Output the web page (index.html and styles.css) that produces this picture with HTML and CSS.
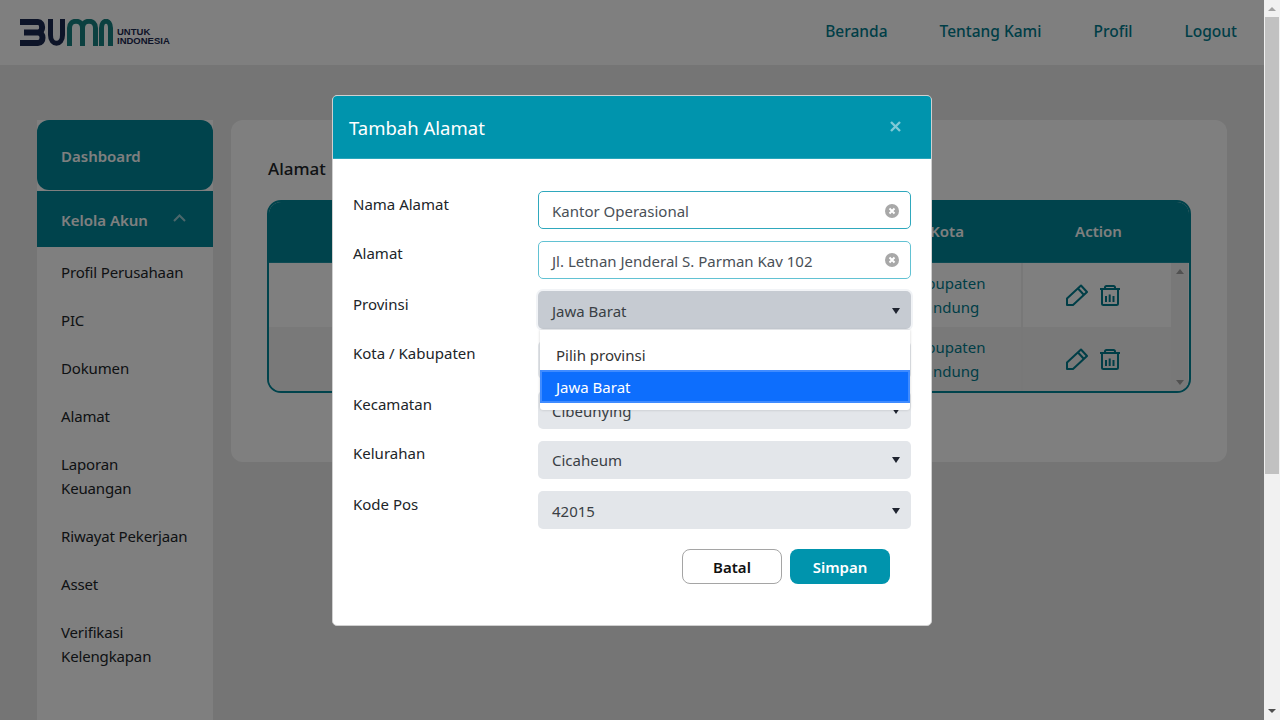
FILE: index.html
```html
<!DOCTYPE html>
<html lang="id">
<head>
<meta charset="utf-8">
<title>Tambah Alamat</title>
<link rel="stylesheet" href="styles.css">
</head>
<body>
<div class="page">
  <header class="topbar">
    <div class="logo">
      <svg class="logo-mark" width="93" height="27" viewBox="0 0 93 27" fill="none">
        <path d="M0 3H18C23.500 3 23.500 13.500 18 13.500H4M18 13.500C24 13.500 24 24 18 24H0" stroke="#1a2850" stroke-width="6" stroke-linejoin="round"/>
        <path d="M30.500 0V16C30.500 27 42.500 27 42.500 16V0" stroke="#1a2850" stroke-width="5"/>
        <path d="M49.500 27V9C49.500 0 62.500 0 62.500 9V27M62.500 9C62.500 0 75.500 0 75.500 9V27" stroke="#168080" stroke-width="5"/>
        <path d="M81.500 27V9C81.500 0 90.500 0 90.500 9V27" stroke="#168080" stroke-width="5"/>
      </svg>
      <div class="logo-text"><span>UNTUK</span><span>INDONESIA</span></div>
    </div>
    <nav class="topnav">
      <a>Beranda</a><a>Tentang Kami</a><a>Profil</a><a>Logout</a>
    </nav>
  </header>
  <main class="content">
    <aside class="sidebar">
      <div class="side-dash">Dashboard</div>
      <div class="side-group">
        <span>Kelola Akun</span>
        <svg class="chev" width="13" height="8" viewBox="0 0 13 8" fill="none"><path d="M1 7L6.500 1.500L12 7" stroke="#fff" stroke-width="2"/></svg>
      </div>
      <ul class="side-list">
        <li>Profil Perusahaan</li>
        <li>PIC</li>
        <li>Dokumen</li>
        <li>Alamat</li>
        <li>Laporan Keuangan</li>
        <li>Riwayat Pekerjaan</li>
        <li>Asset</li>
        <li>Verifikasi Kelengkapan</li>
      </ul>
    </aside>
    <section class="card">
      <h2 class="card-title">Alamat</h2>
      <div class="table">
        <div class="thead">
          <div class="th th-main"></div>
          <div class="th th-kota">Kota</div>
          <div class="th th-action">Action</div>
        </div>
        <div class="tbody">
          <div class="rows">
            <div class="row">
              <div class="td td-main"></div>
              <div class="td td-kota">Kabupaten<br>Bandung</div>
              <div class="td td-action">
                <svg width="23" height="22" viewBox="0 0 23 22" fill="none" stroke="#007c8e" stroke-width="2" stroke-linejoin="round"><path d="M2 21V14.500L16 1.500L22 8L8 21Z"/><path d="M13 4.500L19 11"/></svg>
                <svg width="22" height="22" viewBox="0 0 22 22" fill="none" stroke="#007c8e" stroke-width="2" stroke-linejoin="round"><path d="M1 5H21M6 5V3.500Q6 2 7.500 2H14.500Q16 2 16 3.500V5M3 5V19.500Q3 21 4.500 21H17.500Q19 21 19 19.500V5"/><path d="M7 12V18M10.700 10.500V18M14.500 12V18"/></svg>
              </div>
            </div>
            <div class="row">
              <div class="td td-main"></div>
              <div class="td td-kota">Kabupaten<br>Bandung</div>
              <div class="td td-action">
                <svg width="23" height="22" viewBox="0 0 23 22" fill="none" stroke="#007c8e" stroke-width="2" stroke-linejoin="round"><path d="M2 21V14.500L16 1.500L22 8L8 21Z"/><path d="M13 4.500L19 11"/></svg>
                <svg width="22" height="22" viewBox="0 0 22 22" fill="none" stroke="#007c8e" stroke-width="2" stroke-linejoin="round"><path d="M1 5H21M6 5V3.500Q6 2 7.500 2H14.500Q16 2 16 3.500V5M3 5V19.500Q3 21 4.500 21H17.500Q19 21 19 19.500V5"/><path d="M7 12V18M10.700 10.500V18M14.500 12V18"/></svg>
              </div>
            </div>
          </div>
          <div class="mini-scroll">
            <svg width="8" height="5" viewBox="0 0 8 5"><path d="M4 0L8 5H0Z" fill="#a3a3a3"/></svg>
            <svg width="8" height="5" viewBox="0 0 8 5"><path d="M0 0H8L4 5Z" fill="#a3a3a3"/></svg>
          </div>
        </div>
      </div>
    </section>
  </main>
</div>
<div class="backdrop"></div>
<div class="scrollbar">
  <svg width="8" height="4" viewBox="0 0 8 4"><path d="M4 0L8 4H0Z" fill="#a3a3a3"/></svg>
  <div class="thumb"></div>
  <svg class="arrow-down" width="8" height="4" viewBox="0 0 8 4"><path d="M0 0H8L4 4Z" fill="#505050"/></svg>
</div>
<div class="modal">
  <div class="modal-head">
    <h3>Tambah Alamat</h3>
    <svg class="modal-close" width="11" height="11" viewBox="0 0 11 11"><path d="M1 1L10 10M10 1L1 10" stroke="#7fcad6" stroke-width="2.400"/></svg>
  </div>
  <form class="modal-body">
    <div class="field"><label>Nama Alamat</label>
      <div class="input"><span>Kantor Operasional</span>
        <svg width="14" height="14" viewBox="0 0 14 14"><circle cx="7" cy="7" r="7" fill="#a8a8a8"/><path d="M4.500 4.500L9.500 9.500M9.500 4.500L4.500 9.500" stroke="#fff" stroke-width="2"/></svg>
      </div>
    </div>
    <div class="field"><label>Alamat</label>
      <div class="input input-soft"><span>Jl. Letnan Jenderal S. Parman Kav 102</span>
        <svg width="14" height="14" viewBox="0 0 14 14"><circle cx="7" cy="7" r="7" fill="#a8a8a8"/><path d="M4.500 4.500L9.500 9.500M9.500 4.500L4.500 9.500" stroke="#fff" stroke-width="2"/></svg>
      </div>
    </div>
    <div class="field"><label>Provinsi</label>
      <div class="select select-open"><span>Jawa Barat</span><i class="caret"></i>
        <div class="dropdown">
          <div class="option">Pilih provinsi</div>
          <div class="option option-active">Jawa Barat</div>
        </div>
      </div>
    </div>
    <div class="field"><label>Kota / Kabupaten</label><div class="select"></div></div>
    <div class="field"><label>Kecamatan</label><div class="select"><span>Cibeunying</span><i class="caret"></i></div></div>
    <div class="field"><label>Kelurahan</label><div class="select"><span>Cicaheum</span><i class="caret"></i></div></div>
    <div class="field"><label>Kode Pos</label><div class="select"><span>42015</span><i class="caret"></i></div></div>
    <div class="actions">
      <button type="button" class="btn btn-cancel">Batal</button>
      <button type="button" class="btn btn-save">Simpan</button>
    </div>
  </form>
</div>
</body>
</html>
```
FILE: styles.css
```css
* { box-sizing: border-box; }
html, body { margin: 0; height: 720px; overflow: hidden; }
body { font-family: "Noto Sans", "Open Sans", sans-serif; font-size: 15px; line-height: 24px; color: #212529; background: #ebebeb; }

.page { width: 1264px; height: 720px; overflow: hidden; }

.topbar { height: 65px; background: #fff; display: flex; align-items: center; justify-content: space-between; padding: 0 27px 3px 20px; }
.logo { display: flex; align-items: center; gap: 4px; padding-top: 3px; }
.logo-mark { display: block; }
.logo-text { display: flex; flex-direction: column; font-family: "Liberation Sans", sans-serif; font-weight: 700; color: #1a2850; font-size: 9.500px; line-height: 9px; padding-top: 6px; }
.topnav { display: flex; gap: 52px; }
.topnav a { color: #007c8e; font-weight: 500; font-size: 15.500px; }

.content { display: flex; gap: 18px; padding: 55px 37px 0; align-items: flex-start; }
.sidebar { width: 176px; background: #fff; height: 640px; flex: none; }
.side-dash { height: 70px; background: #008799; border-radius: 12px; color: #fff; font-weight: 600; padding: 24px; margin-bottom: 1px; }
.side-group { height: 56px; background: #008799; color: #fff; font-weight: 600; padding: 1px 27px 0 24px; display: flex; align-items: center; justify-content: space-between; }
.chev { margin-top: -3px; opacity: .6; }
.side-list { list-style: none; margin: 1px 0 0; padding: 0; letter-spacing: -0.15px; }
.side-list li { padding: 12px 24px; }

.card { width: 996px; height: 342px; background: #fff; border-radius: 12px; padding: 36px 36px 0 37px; }
.card-title { margin: 0 0 19px; font-size: 17px; line-height: 25px; font-weight: 500; }
.table { border-radius: 14px; overflow: hidden; width: 924px; height: 193px; border: 2px solid #008799; background: #fff; margin-left: -1px; }
.thead { height: 60px; background: #008799; display: flex; color: #fff; font-weight: 600; align-items: center; padding-bottom: 2px; }
.th-main { flex: 1; }
.th-kota { width: 148px; text-align: center; }
.th-action { width: 168px; text-align: center; padding-right: 13px; }
.tbody { display: flex; height: 129px; border-top: 1px solid #1a95a6; }
.rows { flex: 1; }
.row { height: 64px; display: flex; color: #007c8e; }
.row + .row { background: #f2f2f2; }
.td-main { flex: 1; }
.td-kota { width: 148px; padding: 8px 0; text-align: center; }
.td-action { width: 150px; border-left: 2px solid #f0f0f0; display: flex; align-items: center; justify-content: center; gap: 11px; padding-right: 8px; }
.mini-scroll { width: 17px; margin-right: 1px; background: #f1f1f1; display: flex; flex-direction: column; justify-content: space-between; align-items: center; padding: 6px 0; }

.scrollbar { position: fixed; top: 0; right: 0; width: 16px; height: 720px; background: #f1f1f1; padding: 7px 1px 7px; display: flex; flex-direction: column; align-items: center; }
.thumb { height: 457px; width: 100%; margin-top: 6px; background: #c1c1c1; }
.arrow-down { margin-top: auto; }

.backdrop { position: fixed; inset: 0; background: rgba(0, 0, 0, 0.5); }

.modal { position: fixed; left: 332px; top: 95px; width: 600px; height: 531px; background: #fff; border: 1px solid #d0d0d0; border-radius: 5px; }
.modal-head { height: 63px; background: #0094ad; display: flex; align-items: center; justify-content: space-between; padding: 0 30px 0 16px; border-radius: 4px 4px 0 0; border-bottom: 1px solid #2aa6bb; }
.modal-head h3 { margin: 2px 0 0; font-size: 18.500px; line-height: 28px; font-weight: 400; color: #fff; }
.modal-close { margin-bottom: 2px; }
.modal-body { padding: 32px 20px 0; display: flex; flex-direction: column; gap: 12px; }
.field { display: flex; height: 38px; }
.field label { width: 185px; flex: none; height: 26px; line-height: 26px; }
.field:nth-child(even) label { margin-top: -1px; }
.input, .select { width: 373px; height: 38px; border-radius: 5px; display: flex; align-items: center; justify-content: space-between; padding: 1px 11px 0 14px; color: #495057; position: relative; }
.input { border: 1px solid #2fa8bd; background: #fff; padding-left: 13px; }
.input-soft svg { margin-top: -1px; }
.input-soft { border-color: #62c2d3; }
.select { background: #e3e6ea; color: #3a3f45; }
.field:nth-child(even) .select { padding-top: 0; }
.select-open { background: #c6cbd2; box-shadow: 0 0 0 2px #f1f3f6; }
.caret { width: 0; height: 0; border-left: 4px solid transparent; border-right: 4px solid transparent; border-top: 6px solid #1f2430; }
.dropdown { position: absolute; left: 2px; top: 39px; width: 370px; height: 80px; background: #fff; border-radius: 0 0 3px 3px; box-shadow: 0 0 3px rgba(0,0,0,.18); padding-top: 10px; z-index: 2; color: #333; }
.option { height: 30px; padding: 3px 16px 0; }
.option-active { height: 33px; background: #0d6efd; border: 2px solid #3f8bff; padding: 3px 14px 0; color: #fff; }
.actions { display: flex; justify-content: flex-end; gap: 8px; padding: 8px 21px 0 0; }
.btn { width: 100px; height: 35px; border-radius: 8px; font: 600 15px/24px "Noto Sans", sans-serif; }
.btn-cancel { background: #fff; color: #111; border: 1px solid #a5a5a5; }
.btn-save { background: #0094ad; color: #fff; border: 0; }
```
